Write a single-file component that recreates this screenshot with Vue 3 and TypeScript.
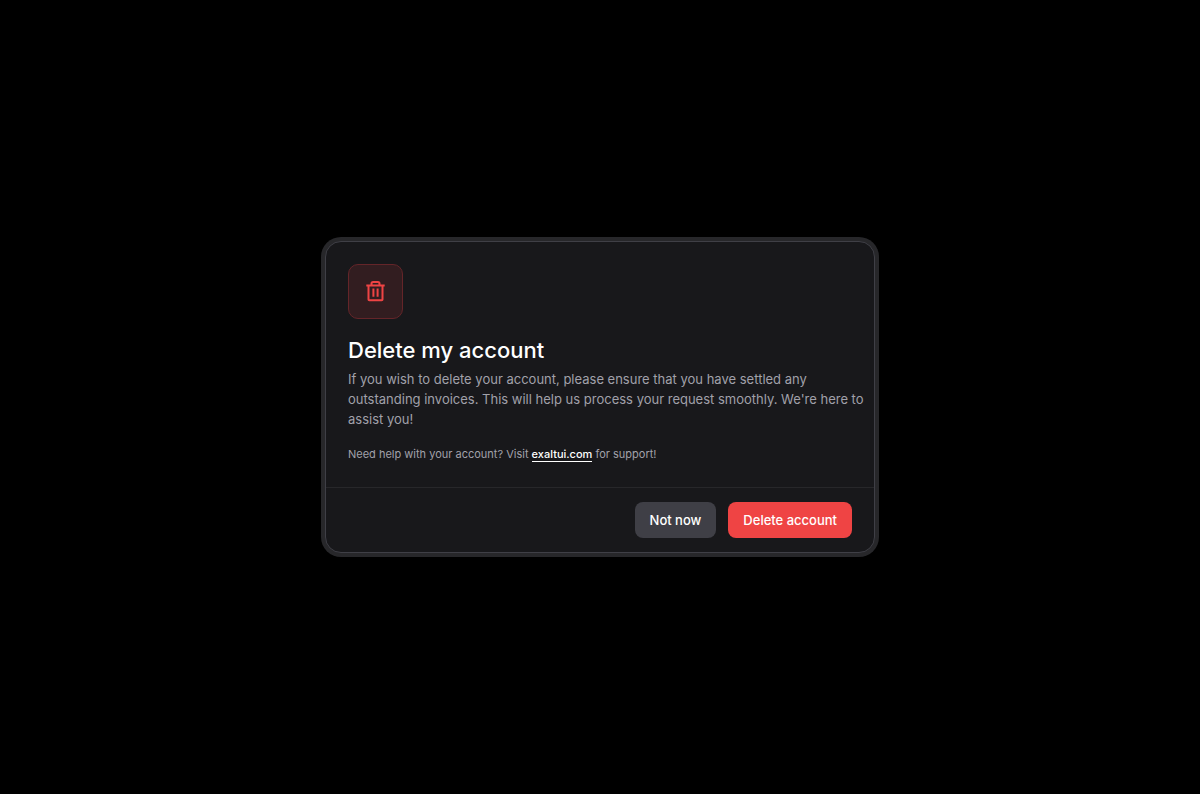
<script setup lang="ts">
import { ref } from 'vue'

const open = ref(true)

function close(): void {
  open.value = false
}
</script>

<template>
  <main class="backdrop">
    <div v-if="open" class="frame" role="dialog" aria-modal="true" aria-labelledby="dialog-title" aria-describedby="dialog-text">
      <div class="card">
        <div class="content">
          <div class="badge">
            <svg width="21" height="21" viewBox="0 0 21 21" fill="none" stroke="currentColor" stroke-width="2" stroke-linejoin="round" aria-hidden="true">
              <path d="M1.3 4.6H19.7M3.5 4.6V18.5Q3.5 19.3 4.3 19.3H16.7Q17.5 19.3 17.5 18.5V4.6M6.5 4.6V2.6Q6.5 1 8.1 1H12.9Q14.5 1 14.5 2.6V4.6M8.4 7.5V15.7M12.6 7.5V15.7" />
            </svg>
          </div>
          <h1 id="dialog-title">Delete my account</h1>
          <p id="dialog-text" class="description">
            If you wish to delete your account, please ensure that you have settled any outstanding
            invoices. This will help us process your request smoothly. We're here to assist you!
          </p>
          <p class="help">
            Need help with your account? Visit <a href="https://exaltui.com">exaltui.com</a> for support!
          </p>
        </div>
        <footer class="actions">
          <button type="button" class="secondary" @click="close">Not now</button>
          <button type="button" class="danger" @click="close">Delete account</button>
        </footer>
      </div>
    </div>
  </main>
</template>

<style>
body {
  background: #000;
}
</style>

<style scoped>
.backdrop {
  min-height: 100vh;
  box-sizing: border-box;
  padding: 16px;
  display: flex;
  align-items: center;
  justify-content: center;
  background: #000;
  font-family: Inter, "Liberation Sans", sans-serif;
}

.frame {
  box-sizing: border-box;
  width: 100%;
  max-width: 558px;
  padding: 4px;
  border-radius: 20px;
  background: #27272a;
}

.card {
  border: 1px solid #3f3f46;
  border-radius: 16px;
  background: #18181b;
}

.content {
  padding: 22px 8px 24px 22px;
}

.badge {
  box-sizing: border-box;
  width: 55px;
  height: 55px;
  display: flex;
  align-items: center;
  justify-content: center;
  border: 1px solid #642529;
  border-radius: 10px;
  background: #321d20;
  color: #ef4444;
}

h1 {
  margin: 16px 0 4px;
  font-size: 22px;
  line-height: 30px;
  font-weight: 500;
  color: #fff;
}

.description {
  margin: 0;
  font-size: 13px;
  line-height: 20px;
  color: #a1a1aa;
}

.help {
  margin: 16px 0 0;
  font-size: 11px;
  line-height: 18px;
  color: #a1a1aa;
}

a {
  color: #fff;
  font-weight: 500;
  text-decoration: none;
  border-bottom: 1px solid #fff;
}

.actions {
  display: flex;
  justify-content: flex-end;
  gap: 12px;
  padding: 14px 22px;
  border-top: 1px solid #27272a;
}

button {
  height: 36px;
  padding: 0 15px;
  border: 0;
  border-radius: 8px;
  font: 500 13px/20px Inter, "Liberation Sans", sans-serif;
  color: #fff;
  cursor: pointer;
}

.secondary {
  background: #3f3f46;
}

.danger {
  background: #ef4444;
}
</style>
